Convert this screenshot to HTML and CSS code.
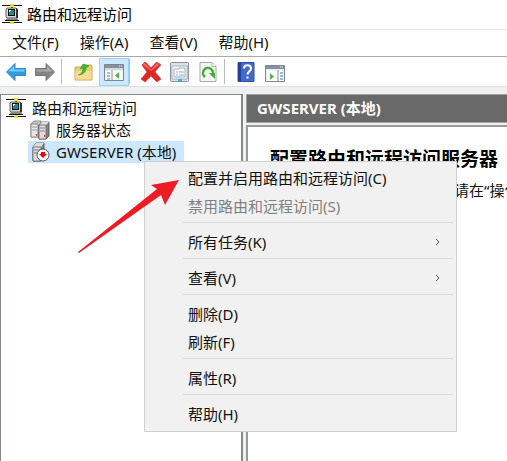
FILE: index.html
```html
<!DOCTYPE html>
<html lang="zh-CN">
<head>
<meta charset="utf-8">
<title>路由和远程访问</title>
<link rel="stylesheet" href="styles.css">
</head>
<body>
<svg class="defs" aria-hidden="true">
  <defs>
    <symbol id="router" viewBox="0 0 20 20">
      <path d="M0 1h20v1H0zM0 18h20v1H0z" fill="#111"/>
      <path d="M9 2h2v2H9zM9 16h2v2H9z" fill="#555"/>
      <path d="M8 0h4v1l-1 2H9L8 1zM8 20h4v-1l-1-2H9l-1 2z" fill="#f7ea00"/>
      <path d="M5 4h9l1 1v8l-1 1H5l-1-1V5z" fill="#d8d8d8" stroke="#444" stroke-width=".8"/>
      <path d="M14 4l2 1v9l-2 1z" fill="#333"/>
      <path d="M6 5h7v7H6z" fill="#111"/>
      <path d="M7 6h5v5H7z" fill="#14918d"/>
      <path d="M7 6h2v1H8v1H7z" fill="#dff"/>
      <path d="M5 14h10l2 3H3z" fill="#888"/>
      <path d="M3 16h14v1H3z" fill="#111"/>
    </symbol>
    <symbol id="servers" viewBox="0 0 20 20">
      <path d="M1 4l3-3h7l-1 3v13H1z" fill="#c9c9c9" stroke="#777" stroke-width=".8"/>
      <path d="M1 4h7v13H1z" fill="#e6e6e6" stroke="#777" stroke-width=".8"/>
      <path d="M2 7h5M2 10h5" stroke="#888" stroke-width=".8"/>
      <path d="M9 5l3-3h7v14l-3 3H9z" fill="#858585" stroke="#444" stroke-width=".8"/>
      <path d="M9 5l3-3h7l-3 3z" fill="#e2e2e2"/>
      <path d="M9 5h7v14H9z" fill="#dcdcdc" stroke="#666" stroke-width=".8"/>
      <path d="M10 8h5M10 11h5" stroke="#777" stroke-width=".8"/>
      <path d="M6 14h1v2H6zM14 15h1v2h-1z" fill="#e33"/>
    </symbol>
    <symbol id="server-down" viewBox="0 0 20 20">
      <path d="M3 5l3-4h8v13l-3 5H3z" fill="#808080" stroke="#444" stroke-width=".8"/>
      <path d="M3 5l3-4h8l-3 4z" fill="#ddd"/>
      <path d="M3 5h8v14H3z" fill="#ddd" stroke="#666" stroke-width=".8"/>
      <path d="M4 8h6M4 11h4" stroke="#777"/>
      <circle cx="13" cy="13" r="6" fill="#fff" stroke="#333" stroke-width=".8"/>
      <path d="M11 10h4v2h2l-4 4-4-4h2z" fill="#f0000b"/>
    </symbol>
  </defs>
</svg>
<div class="window">
  <header class="titlebar">
    <svg class="icon"><use href="#router"/></svg>
    <span>路由和远程访问</span>
  </header>
  <nav class="menubar">
    <button>文件(F)</button><button>操作(A)</button><button>查看(V)</button><button>帮助(H)</button>
  </nav>
  <div class="toolbar">
    <button class="tool" aria-label="后退"><svg viewBox="0 0 20 20"><path d="M.5 10L9 1.500V6.500h10.500v7H9v5z" fill="#2c9ee2" stroke="#3a88bd"/><path d="M2.500 9.500L8 4v3.500h10.500v2z" fill="#7accf5"/></svg></button>
    <button class="tool tool-forward" aria-label="前进"><svg viewBox="0 0 20 20"><path d="M19.500 10L11 1.500V6.500H.5v7H11v5z" fill="#858585" stroke="#747474"/><path d="M17.500 9.500L12 4v3.500H1.500v2z" fill="#aaa"/></svg></button>
    <span class="divider divider-wide"></span>
    <button class="tool tool-folder" aria-label="上一级"><svg viewBox="0 0 20 20"><path d="M1 5h6l2-2h8l1 1v14H1z" fill="#efcc71" stroke="#c9a85c"/><path d="M1.500 9h16v8.500h-16z" fill="#f8dc91"/><path d="M4 13c4-1 5-4 5-7L6 7l3-5 6 2-3 2c0 4-3 7-8 7z" fill="#39ba32" stroke="#269322" stroke-width=".5"/></svg></button>
    <button class="tool tool-active" aria-label="显示控制台树"><svg viewBox="0 0 20 20"><path d="M.5 2.500h19v16H.5z" fill="#eee" stroke="#7c8794"/><path d="M1 3h18v3H1z" fill="#8491a0"/><path d="M15 4h1M17 4h1" stroke="#fff"/><path d="M1 7h18" stroke="#bdc5cc"/><path d="M2 9h5v9H2zM9 9h9v9H9z" fill="#fff"/><path d="M3 11h3M3 14h3M3 17h3" stroke="#4c78b4"/><path d="M8 8v10" stroke="#999"/><path d="M15 10v7l-4-3.500z" fill="#4fb744"/></svg></button>
    <span class="divider"></span>
    <button class="tool" aria-label="删除"><svg viewBox="0 0 20 20"><path d="M1 3l3-3c2 1 4 4 6 6 2-2 4-5 6-6l4 3c-2 2-4 4-6 7l6 7-4 3-6-6-6 6-4-3 6-7C4 7 2 5 1 3z" fill="#df2526" stroke="#cf4040" stroke-width=".7"/><path d="M2 3l2-2 6 7 6-7 2 2-8 6z" fill="#f26a65"/></svg></button>
    <button class="tool tool-gap" aria-label="属性"><svg viewBox="0 0 20 20"><rect x=".5" y=".5" width="18" height="19" rx="1" fill="#dce1e6" stroke="#84909b"/><path d="M2 4h15v13H2z" fill="#f8f9fa" stroke="#aab2ba"/><path d="M4 7h5V6h6v9H4z" fill="#fff" stroke="#9fb0bd"/><path d="M6 10h2M9 10h5M6 13h2M9 13h5" stroke="#86aac6"/><path d="M8 18h4" stroke="#23bce8" stroke-width="2"/></svg></button>
    <button class="tool tool-gap" aria-label="刷新"><svg viewBox="0 0 20 20"><path d="M1 .5h12l4 4v15H1z" fill="#f5f5f5" stroke="#aaa"/><path d="M13 .5v4h4" fill="#fff" stroke="#aaa"/><path d="M6 15a5 5 0 1 1 7-1" fill="none" stroke="#3caf36" stroke-width="2.500"/><path d="M10 11h6v6z" fill="#3caf36"/></svg></button>
    <span class="divider divider-tight"></span>
    <button class="tool" aria-label="帮助"><svg viewBox="0 0 20 20"><path d="M2 .5h16v19H2z" fill="#4268c8" stroke="#3550a0"/><path d="M2 1h3v18H2z" fill="#243f98"/><path d="M8 6.500c0-4.500 7-4.500 7 0 0 3-3.500 3-3.500 6" fill="none" stroke="#fff" stroke-width="2"/><path d="M10.500 14.500h2v2h-2z" fill="#fff"/></svg></button>
    <button class="tool tool-forward" aria-label="显示操作窗格"><svg viewBox="0 0 20 20"><path d="M.5 3.500h19v16H.5z" fill="#eee" stroke="#7c8794"/><path d="M1 4h18v3H1z" fill="#8491a0"/><path d="M15 5h1M17 5h1" stroke="#fff"/><path d="M2 9h10v10H2zM14 9h4v10h-4z" fill="#fff"/><path d="M13 8v11" stroke="#999"/><path d="M15 11h3M15 14h3M15 17h3" stroke="#3c77bf"/><path d="M5 11v7l4-3.500z" fill="#4fb744"/></svg></button>
  </div>
  <main class="panes">
    <ul class="tree">
      <li><svg class="icon"><use href="#router"/></svg><span>路由和远程访问</span></li>
      <li class="child"><svg class="icon"><use href="#servers"/></svg><span>服务器状态</span></li>
      <li class="child selected"><svg class="icon"><use href="#server-down"/></svg><span>GWSERVER (本地)</span></li>
    </ul>
    <section class="details">
      <h1>GWSERVER (本地)</h1>
      <div class="content">
        <h2>配置路由和远程访问服务器</h2>
        <p>请在“操作</p>
      </div>
    </section>
  </main>
</div>
<div class="context-menu" role="menu">
  <button role="menuitem">配置并启用路由和远程访问(C)</button>
  <button role="menuitem" disabled>禁用路由和远程访问(S)</button>
  <hr>
  <button role="menuitem">所有任务(K)<svg class="chevron" viewBox="0 0 6 8"><path d="M1 1l3 3-3 3"/></svg></button>
  <hr>
  <button role="menuitem">查看(V)<svg class="chevron" viewBox="0 0 6 8"><path d="M1 1l3 3-3 3"/></svg></button>
  <hr>
  <button role="menuitem">删除(D)</button>
  <button role="menuitem">刷新(F)</button>
  <hr>
  <button role="menuitem">属性(R)</button>
  <hr>
  <button role="menuitem">帮助(H)</button>
</div>
<svg class="pointer" viewBox="0 0 102 74" aria-hidden="true"><path d="M0 72L79 9 73 5 101 0 87 25 83 15 1 73z" fill="#ed1c24"/></svg>
</body>
</html>
```
FILE: styles.css
```css
* { box-sizing: border-box; }
html, body { height: 100%; }
body {
  margin: 0;
  overflow: hidden;
  background: #fff;
  color: #111;
  font: 15px/22px "Noto Sans", "Noto Sans CJK SC", sans-serif;
}
button {
  border: 0;
  padding: 0;
  background: none;
  color: inherit;
  font: inherit;
  white-space: nowrap;
}
.defs { position: absolute; width: 0; height: 0; }
.window { display: flex; flex-direction: column; min-height: 100%; background: #f0f0f0; }
.icon { flex: none; width: 20px; height: 20px; }
.titlebar { display: flex; align-items: center; gap: 5px; height: 29px; padding: 0 0 2px 2px; background: #fff; color: #000; }
.menubar {
  display: flex;
  gap: 21px;
  height: 28px;
  padding: 0 0 2px 12px;
  border-top: 1px solid #e8e8e8;
  border-bottom: 1px solid #a8a8a8;
  background: #fff;
}
.toolbar { display: flex; align-items: center; height: 30px; padding: 0 6px; border-bottom: 1px solid #e0e0e0; background: #fff; }
.tool { display: flex; align-items: center; justify-content: center; flex: none; width: 20px; height: 28px; }
.tool svg { width: 20px; height: 20px; }
.tool-forward { margin-left: 9px; }
.tool-folder { margin: 0 5px 0 1px; }
.tool-active { width: 30px; border: 1px solid #99d1ff; background: #cce8ff; }
.tool-gap { margin-left: 9px; }
.divider { flex: none; width: 1px; height: 25px; margin-right: 11px; background: #bbb; }
.divider-wide { margin-left: 6px; }
.divider-tight { margin-left: 5px; }
.panes { display: grid; grid-template-columns: 243fr 261fr; gap: 3px; flex: 1; padding-top: 7px; }
.tree { margin: 0; padding: 2px 5px; list-style: none; background: #fff; border: 1px solid #828790; border-width: 1px 2px 0 1px; }
.tree li { display: flex; align-items: center; gap: 6px; height: 22px; white-space: nowrap; }
.tree .child { margin-left: 24px; }
.tree .selected { width: max-content; margin-left: 22px; padding: 0 8px 0 2px; background: #cce8ff; }
.details { display: flex; flex-direction: column; gap: 2px; min-width: 0; }
h1, h2, p { margin: 0; white-space: nowrap; }
h1 { height: 29px; padding-left: 10px; border: 1px solid #a0a0a0; border-right: 0; background: #696969; color: #fff; font-size: 15px; line-height: 27px; }
.content { flex: 1; padding: 20px 0 0 22px; border: 2px solid #999; border-width: 2px 0 0 2px; background: #fff; overflow: hidden; }
h2 { color: #000; font-size: 19px; line-height: 24px; }
.content p { margin-top: 8px; padding-left: 184px; }
.context-menu { position: absolute; left: 144px; top: 161px; width: 313px; padding: 3px 3px 2px 38px; border: 1px solid #d0d0d0; background: #f1f1f1; }
.context-menu button { display: flex; align-items: center; justify-content: space-between; width: 100%; height: 28px; padding: 0 12px 2px 5px; text-align: left; }
.context-menu button:disabled { color: #808080; }
.context-menu hr { height: 1px; margin: 1px 0 6px; border: 0; background: #dcdcdc; }
.chevron { width: 6px; height: 8px; fill: none; stroke: #555; }
.pointer { position: absolute; left: 78px; top: 180px; width: 102px; height: 74px; }
```
